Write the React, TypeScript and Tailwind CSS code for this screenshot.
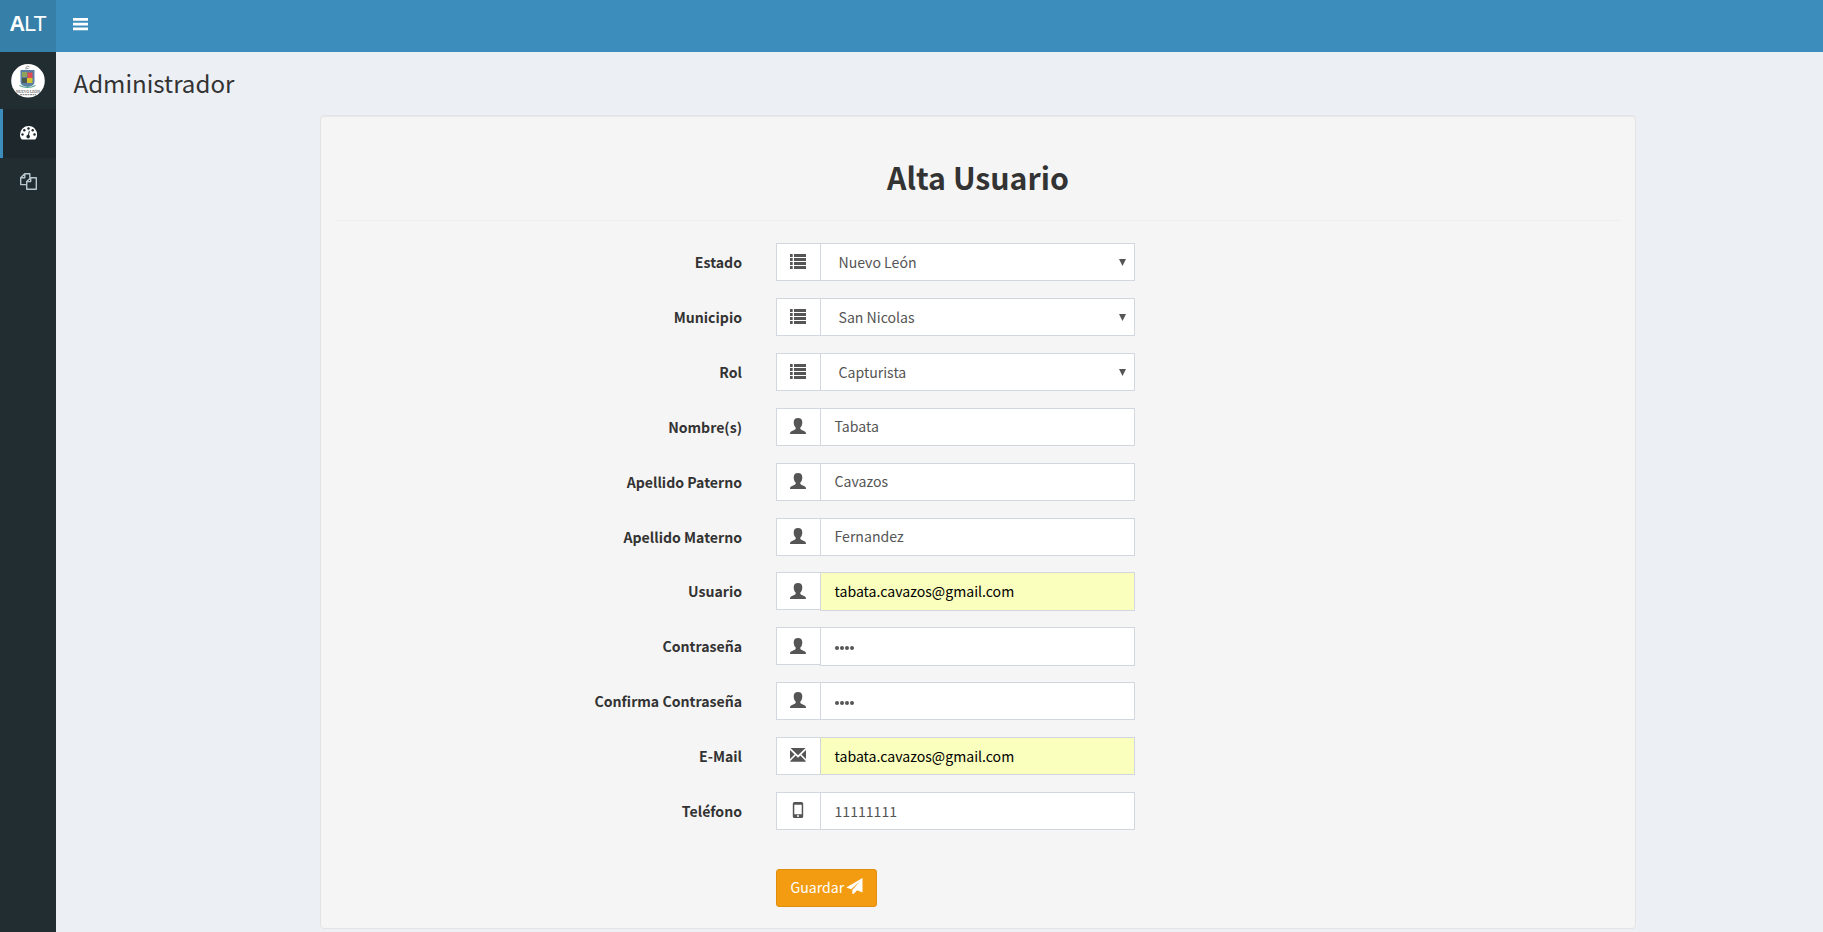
import React from "react";

type IconKind = "list" | "user" | "mail" | "phone";

const SANS = "font-['Noto_Sans_CJK_SC',sans-serif]";

function Glyph({ kind }: { kind: IconKind }) {
  if (kind === "list")
    return (
      <svg width="16" height="16" viewBox="0 0 16 16" fill="currentColor">
        <path d="M0 1h2.700v3H0zM4 1h12v3H4zM0 5h2.700v3H0zM4 5h12v3H4zM0 9h2.700v3H0zM4 9h12v3H4zM0 13h2.700v3H0zM4 13h12v3H4z" />
      </svg>
    );
  if (kind === "user")
    return (
      <svg width="16" height="16" viewBox="0 0 16 16" fill="currentColor">
        <path d="M8 0C5.200 0 3.700 1.600 3.700 4.200c0 2.300.8 4.300 2 5.400v.9c0 .6-.4 1-1 1.300L1.500 13.200C.4 13.700 0 14.400 0 16h16c0-1.600-.4-2.300-1.500-2.800l-3.200-1.400c-.6-.3-1-.7-1-1.300v-.9c1.200-1.100 2-3.100 2-5.400C12.300 1.600 10.800 0 8 0z" />
      </svg>
    );
  if (kind === "mail")
    return (
      <svg width="16" height="16" viewBox="0 0 16 16" fill="currentColor">
        <path d="M.5 1h15L8 8.300zM0 3 4.600 7.500 0 12zM16 3v9l-4.600-4.500zM5.700 8.600 8 10.800l2.300-2.200 5.400 5.300v.9H.3v-.9z" />
      </svg>
    );
  return (
    <svg width="16" height="16" viewBox="0 0 16 16" fill="currentColor" fillRule="evenodd">
      <path d="M4.500 0h7Q13.200 0 13.200 1.500v13Q13.200 16 11.500 16h-7Q2.800 16 2.800 14.500v-13Q2.800 0 4.500 0zM4.300 2.800v9.400h7.400V2.800zM7 13.300v1.400h2v-1.400z" />
    </svg>
  );
}

function Row({
  label,
  icon,
  value,
  kind = "text",
  tall = false,
  filled = false,
  textTop = "pt-[6px]",
  className = "mb-[17px]",
}: {
  label: string;
  icon: IconKind;
  value: string;
  kind?: "text" | "select" | "password";
  tall?: boolean;
  filled?: boolean;
  textTop?: string;
  className?: string;
}) {
  return (
    <div className={`flex h-[38px] ${className}`}>
      <label className="w-[406px] pt-[8px] text-right text-[14.1px] leading-[22px] font-bold text-[#333]">
        {label}
      </label>
      <div className="ml-[34px] flex w-[359px] items-start text-[#555]">
        <span
          className={`flex h-[38px] w-[44px] border border-r-0 border-[#d2d6de] bg-white pl-[13px] ${
            tall ? "pt-[10px]" : "pt-[9px]"
          }`}
        >
          <Glyph kind={icon} />
        </span>
        <div
          className={`flex w-[315px] justify-between border border-[#d2d6de] text-[14.1px] leading-[22px] ${
            tall ? "h-[39px]" : "h-[38px]"
          } ${filled ? "bg-[#faffbd] text-black" : "bg-white"} ${textTop} ${
            kind === "select" ? "pr-[8px] pl-[17.500px]" : "pl-[13.500px]"
          }`}
        >
          {kind === "password" ? (
            <span className="flex gap-[1px] pt-[11px]" aria-label={label}>
              {[0, 1, 2, 3].map((i) => (
                <i key={i} className="h-[4px] w-[4px] rounded-full bg-[#555]" />
              ))}
            </span>
          ) : (
            <span>{value}</span>
          )}
          {kind === "select" && (
            <svg className="mt-[8px]" width="7" height="7" viewBox="0 0 7 7" fill="#555">
              <path d="M0 0h7L3.500 7z" />
            </svg>
          )}
        </div>
      </div>
    </div>
  );
}

function Crest() {
  return (
    <svg className="overflow-visible" width="34" height="34" viewBox="0 0 34 34">
      <circle cx="17" cy="16.800" r="16.800" fill="#fff" />
      <path d="M15 5.500V3.300L16.800 2l1.700 1M15.500 4.500h2" stroke="#999" fill="none" strokeWidth="1" />
      <path d="M9.500 6H23.500v12q0 4-7 5Q9.500 22 9.500 18z" fill="#5b7fa3" />
      <path d="M11 8h5v5h-5z" fill="#8fa35c" />
      <path d="M16.500 8.500h5V14h-5z" fill="#e04a50" />
      <path d="M11 14h5v5h-5z" fill="#4c5b4f" />
      <path d="M16 14h5.500v5H16z" fill="#d5c331" />
      <path d="M8.500 21.500q8 4 16 0" stroke="#4fa58a" strokeWidth="1.200" fill="none" />
      <text x="17" y="29" textAnchor="middle" fontSize="5" textLength="24" lengthAdjust="spacingAndGlyphs" fill="#222" fontFamily="Liberation Serif">
        NUEVO LEÓN
      </text>
      <path d="M9 30.700h16" stroke="#777" strokeWidth="1" strokeDasharray="2 .5" />
    </svg>
  );
}

export default function App() {
  return (
    <div className={`flex h-[932px] w-full flex-col overflow-hidden bg-[#ecf0f5] text-[#333] ${SANS}`}>
      <header className="flex h-[52px] shrink-0 bg-[#3c8dbc] text-white">
        <div className="w-[56px] bg-[#367fa9] pl-[9.500px] font-['Liberation_Sans',sans-serif] text-[21.500px] leading-[49px] tracking-[-0.9px]">
          <b>A</b>LT
        </div>
        <svg className="mt-[18px] ml-[17px]" width="15" height="13" viewBox="0 0 15 13" fill="#fff">
          <path d="M0 0h15v2.700H0zM0 4.800h15v2.700H0zM0 9.500h15v2.700H0z" />
        </svg>
      </header>
      <div className="flex min-h-0 flex-1">
        <aside className="w-[56px] shrink-0 bg-[#222d32]">
          <div className="flex h-[57px] pt-[12px] pl-[11px]">
            <Crest />
          </div>
          <div className="flex h-[49px] border-l-3 border-[#3c8dbc] bg-[#1e282c] pt-[17px] pl-[17px] text-white">
            <svg width="17" height="14" viewBox="0 0 17 14">
              <path d="M8.500 0A8.500 8.500 0 0 0 0 8.500c0 1.700.5 3.200 1.300 4.600.2.300.4.400.7.400h13c.3 0 .5-.1.700-.4A8.500 8.500 0 0 0 8.500 0z" fill="#fff" />
              <g fill="#1e282c">
                <circle cx="2.500" cy="8.500" r="1.200" />
                <circle cx="4.300" cy="4.300" r="1.200" />
                <circle cx="8.500" cy="2.500" r="1.200" />
                <circle cx="12.700" cy="4.300" r="1.200" />
                <circle cx="14.500" cy="8.500" r="1.200" />
                <path d="m8.900 4.800.9.200-.8 4a1.800 1.800 0 1 1-1-.2z" />
              </g>
            </svg>
          </div>
          <div className="flex h-[49px] pt-[15px] pl-[20px]">
            <svg width="17" height="17" viewBox="0 0 17 17" fill="none" stroke="#b8c7ce" strokeWidth="1.400" strokeLinejoin="round">
              <path d="M6.500 11.600H.7V4.700L4.700.7h5.100v4M.7 4.700h4.100V.7M10.700 4.700h5.600v11.600H6.700V8.600zM6.700 8.600h4v-4" />
            </svg>
          </div>
        </aside>
        <main className="flex-1">
          <h1 className="pt-[16px] pl-[17.500px] text-[24.100px] leading-[30px]">Administrador</h1>
          <section className="mt-[17px] ml-[264px] h-[814px] w-[1316px] rounded-[4px] border border-[#e3e3e3] bg-[#f5f5f5] px-[15px] shadow-[inset_0_1px_1px_rgba(0,0,0,0.05)]">
            <h2 className="pt-[41px] text-center text-[30.300px] leading-[40px] font-bold">Alta Usuario</h2>
            <div className="mt-[23px] h-[1px] bg-[#eee]" />
            <form className="mt-[22px]">
              <Row label="Estado" icon="list" value="Nuevo León" kind="select" textTop="pt-[7px]" />
              <Row label="Municipio" icon="list" value="San Nicolas" kind="select" textTop="pt-[7px]" />
              <Row label="Rol" icon="list" value="Capturista" kind="select" textTop="pt-[7px]" />
              <Row label="Nombre(s)" icon="user" value="Tabata" />
              <Row label="Apellido Paterno" icon="user" value="Cavazos" />
              <Row label="Apellido Materno" icon="user" value="Fernandez" className="mb-[16px]" />
              <Row label="Usuario" icon="user" value="tabata.cavazos@gmail.com" filled tall textTop="pt-[7px]" />
              <Row label="Contraseña" icon="user" value="" kind="password" tall textTop="pt-[7px]" />
              <Row label="Confirma Contraseña" icon="user" value="" kind="password" textTop="pt-[7px]" />
              <Row label="E-Mail" icon="mail" value="tabata.cavazos@gmail.com" filled textTop="pt-[7px]" />
              <Row label="Teléfono" icon="phone" value="11111111" textTop="pt-[7px]" className="mb-0" />
              <button
                type="button"
                className="mt-[39px] ml-[440px] flex h-[38px] w-[101px] rounded-[3px] border border-[#e08e0b] bg-[#f39c12] pt-[6px] pl-[13.500px] text-[14.1px] leading-[22px] text-white"
              >
                Guardar
                <svg className="mt-[2px] ml-[1.500px]" width="17" height="16" viewBox="0 0 17 16" fill="#fff">
                  <path d="M16.500 0v14.500l-5.300-2.200L7.500 16l-1.200-.3V12L14.500 2.800 5.200 11.200.3 9.500z" />
                </svg>
              </button>
            </form>
          </section>
        </main>
      </div>
    </div>
  );
}
